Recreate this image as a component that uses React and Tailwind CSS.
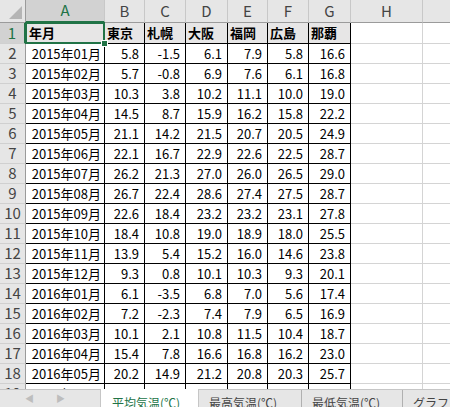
import React from "react";

const font = { fontFamily: '"Noto Sans CJK JP", "Noto Sans", sans-serif' };

const cols = [
  { key: "A", w: "w-[79px]" },
  { key: "B", w: "w-[40px]" },
  { key: "C", w: "w-[41px]" },
  { key: "D", w: "w-[42px]" },
  { key: "E", w: "w-[40px]" },
  { key: "F", w: "w-[41px]" },
  { key: "G", w: "w-[42px]" },
];

const cities = ["東京", "札幌", "大阪", "福岡", "広島", "那覇"];

const rows = [
  ["2015年01月", "5.8", "-1.5", "6.1", "7.9", "5.8", "16.6"],
  ["2015年02月", "5.7", "-0.8", "6.9", "7.6", "6.1", "16.8"],
  ["2015年03月", "10.3", "3.8", "10.2", "11.1", "10.0", "19.0"],
  ["2015年04月", "14.5", "8.7", "15.9", "16.2", "15.8", "22.2"],
  ["2015年05月", "21.1", "14.2", "21.5", "20.7", "20.5", "24.9"],
  ["2015年06月", "22.1", "16.7", "22.9", "22.6", "22.5", "28.7"],
  ["2015年07月", "26.2", "21.3", "27.0", "26.0", "26.5", "29.0"],
  ["2015年08月", "26.7", "22.4", "28.6", "27.4", "27.5", "28.7"],
  ["2015年09月", "22.6", "18.4", "23.2", "23.2", "23.1", "27.8"],
  ["2015年10月", "18.4", "10.8", "19.0", "18.9", "18.0", "25.5"],
  ["2015年11月", "13.9", "5.4", "15.2", "16.0", "14.6", "23.8"],
  ["2015年12月", "9.3", "0.8", "10.1", "10.3", "9.3", "20.1"],
  ["2016年01月", "6.1", "-3.5", "6.8", "7.0", "5.6", "17.4"],
  ["2016年02月", "7.2", "-2.3", "7.4", "7.9", "6.5", "16.9"],
  ["2016年03月", "10.1", "2.1", "10.8", "11.5", "10.4", "18.7"],
  ["2016年04月", "15.4", "7.8", "16.6", "16.8", "16.2", "23.0"],
  ["2016年05月", "20.2", "14.9", "21.2", "20.8", "20.3", "25.7"],
  ["2016年06月", "22.0", "18.0", "23.3", "22.9", "23.2", "27.5"],
];

const RowHeader = ({ n, selected }) => (
  <div
    className={`w-[26px] shrink-0 flex items-center justify-center text-[15px] border-b border-b-[#d0d0d0] ${
      selected
        ? "bg-[#d2d2d2] text-[#217346] border-r-2 border-r-[#217346]"
        : "bg-[#e6e6e6] text-[#444] border-r border-r-[#9b9b9b]"
    }`}
  >
    {n}
  </div>
);

const Blank = () => (
  <>
    <div className="w-[72px] shrink-0 border-r border-b border-[#d4d4d4]" />
    <div className="flex-1 border-b border-[#d4d4d4]" />
  </>
);

export default function App() {
  return (
    <div className="w-[450px] h-[407px] bg-white overflow-hidden flex flex-col select-none" style={font}>
      <div className="h-[389px] overflow-hidden flex flex-col">
        {/* column headers */}
        <div className="h-[23px] flex shrink-0">
          <div className="w-[26px] shrink-0 bg-[#e6e6e6] border-r border-b border-[#9b9b9b] relative">
            <div className="absolute right-[3px] bottom-[3px] w-0 h-0 border-l-[13px] border-l-transparent border-b-[13px] border-b-[#b5b5b5]" />
          </div>
          {cols.map((c, i) => (
            <div
              key={c.key}
              className={`${c.w} shrink-0 flex items-center justify-center text-[15px] border-r border-r-[#c8c8c8] ${
                i === 0
                  ? "bg-[#d2d2d2] text-[#217346] border-b-2 border-b-[#217346]"
                  : "bg-[#e6e6e6] text-[#444] border-b border-b-[#9b9b9b]"
              }`}
            >
              {c.key}
            </div>
          ))}
          <div className="w-[72px] shrink-0 flex items-center justify-center text-[15px] text-[#444] bg-[#e6e6e6] border-r border-r-[#c8c8c8] border-b border-b-[#9b9b9b]">
            H
          </div>
          <div className="flex-1 bg-[#e6e6e6] border-b border-b-[#9b9b9b]" />
        </div>

        {/* row 1 */}
        <div className="h-[21px] flex shrink-0">
          <RowHeader n={1} selected />
          <div className="w-[79px] shrink-0 bg-[#e7e6e6] border-r border-b border-black relative flex items-center pl-[3px] text-[13px] font-bold text-black">
            年月
            <div className="absolute -left-[1px] -top-[1px] -right-[1px] -bottom-[1px] border-2 border-[#217346]" />
            <div className="absolute -right-[4px] -bottom-[4px] w-[7px] h-[7px] bg-[#217346] border border-white" />
          </div>
          {cities.map((c, i) => (
            <div
              key={c}
              className={`${cols[i + 1].w} shrink-0 bg-[#e7e6e6] border-r border-b border-black flex items-center pl-[2px] text-[13px] font-bold text-black`}
            >
              {c}
            </div>
          ))}
          <Blank />
        </div>

        {/* data rows */}
        {rows.map((r, ri) => (
          <div key={ri} className="h-[20px] flex shrink-0">
            <RowHeader n={ri + 2} />
            {r.map((v, ci) => (
              <div
                key={ci}
                className={`${cols[ci].w} shrink-0 border-r border-b border-black flex items-center justify-end ${
                  ci === 0 ? "pr-[3px]" : "pr-[5px]"
                } text-[13px] text-black`}
              >
                {v}
              </div>
            ))}
            <Blank />
          </div>
        ))}
      </div>

      {/* sheet tabs */}
      <div className="h-[18px] flex border-t border-[#c6c6c6] bg-[#e6e6e6] text-[12px] leading-[16px] shrink-0">
        <div className="w-[100px] shrink-0 flex items-center gap-[22px] pl-[25px] text-[#bdbdbd] text-[9px]">
          <span>◀</span>
          <span>▶</span>
        </div>
        <div className="w-[99px] shrink-0 bg-white border-l border-r border-[#c6c6c6] -mt-[1px] pl-[11px] pt-[6px] text-[#217346]">
          平均気温(℃)
        </div>
        <div className="w-[103px] shrink-0 border-r border-[#b0b0b0] pl-[10px] pt-[5px] text-[#444]">
          最高気温(℃)
        </div>
        <div className="w-[101px] shrink-0 border-r border-[#b0b0b0] pl-[10px] pt-[5px] text-[#444]">
          最低気温(℃)
        </div>
        <div className="flex-1 pl-[10px] pt-[5px] text-[#444] whitespace-nowrap">グラフ</div>
      </div>
    </div>
  );
}
